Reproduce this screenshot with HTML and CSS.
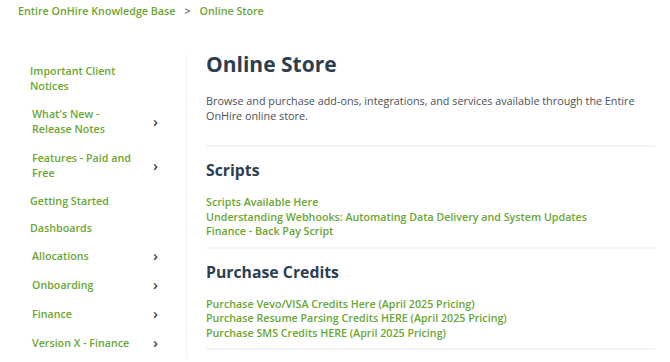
FILE: index.html
```html
<!DOCTYPE html>
<html lang="en">
<head>
  <meta charset="UTF-8">
  <title>Online Store</title>
  <link rel="stylesheet" href="styles.css">
</head>
<body>
<div class="crumbs">
  <a href="#">Entire OnHire Knowledge Base</a>
  <span class="sep">&gt;</span>
  <a href="#">Online Store</a>
</div>

<div class="page">
  <ul class="nav">
    <li class="plain"><a href="#">Important Client Notices</a></li>
    <li><a href="#">What's New - Release Notes</a><span class="chev">&#8250;</span></li>
    <li><a href="#">Features - Paid and Free</a><span class="chev">&#8250;</span></li>
    <li class="plain"><a href="#">Getting Started</a></li>
    <li class="plain"><a href="#">Dashboards</a></li>
    <li><a href="#">Allocations</a><span class="chev">&#8250;</span></li>
    <li><a href="#">Onboarding</a><span class="chev">&#8250;</span></li>
    <li><a href="#">Finance</a><span class="chev">&#8250;</span></li>
    <li><a href="#">Version X - Finance</a><span class="chev">&#8250;</span></li>
  </ul>

  <div class="main">
    <h1>Online Store</h1>
    <p class="intro">Browse and purchase add-ons, integrations, and services available through the Entire OnHire online store.</p>

    <div class="section">
      <h2>Scripts</h2>
      <a href="#">Scripts Available Here</a>
      <a href="#">Understanding Webhooks: Automating Data Delivery and System Updates</a>
      <a href="#">Finance - Back Pay Script</a>
    </div>

    <div class="section">
      <h2>Purchase Credits</h2>
      <a href="#">Purchase Vevo/VISA Credits Here (April 2025 Pricing)</a>
      <a href="#">Purchase Resume Parsing Credits HERE (April 2025 Pricing)</a>
      <a href="#">Purchase SMS Credits HERE (April 2025 Pricing)</a>
    </div>
  </div>
</div>
</body>
</html>
```

FILE: styles.css
```css
* {
  margin: 0;
  padding: 0;
}

body {
  background: #fff;
  font-family: "Open Sans", "Liberation Sans", sans-serif;
  color: #4a4f55;
}

a {
  color: #6aa632;
  text-decoration: none;
}

.crumbs {
  display: flex;
  align-items: center;
  height: 22px;
  padding-left: 18px;
  font-size: 10.7px;
  font-weight: 600;
}

.crumbs .sep {
  margin: 0 9px;
  color: #555c63;
}

.page {
  display: flex;
  margin-top: 33px;
}

.nav {
  list-style: none;
  width: 186px;
  border-right: 1px solid #f0f1f2;
  padding-top: 3px;
}

.nav > li {
  display: flex;
  align-items: center;
  padding: 7px 0 7px 32px;
  font-size: 10.7px;
  font-weight: 600;
  line-height: 15px;
}

.nav > li > a {
  width: 108px;
}

.nav > li.plain {
  padding: 6px 0 6px 30px;
}

.nav .chev {
  margin-left: 13px;
  margin-top: -2px;
  color: #3c4652;
  font-size: 15px;
  font-weight: 600;
}

.main {
  flex: 1;
  padding: 0 15px 0 19px;
}

h1 {
  font-size: 21px;
  font-weight: 700;
  color: #2d3e50;
  line-height: 24px;
  margin-top: -3px;
}

.intro {
  margin-top: 18px;
  font-size: 10.8px;
  line-height: 14.5px;
  padding-bottom: 22px;
  border-bottom: 2px solid #f3f4f5;
}

.section {
  padding: 14px 0 8px;
  border-bottom: 2px solid #f3f4f5;
}

.section h2 {
  font-size: 15.8px;
  font-weight: 700;
  color: #2d3e50;
  line-height: 18px;
  margin-bottom: 16px;
}

.section a {
  display: block;
  font-size: 10.7px;
  font-weight: 600;
  line-height: 14.5px;
}
```
